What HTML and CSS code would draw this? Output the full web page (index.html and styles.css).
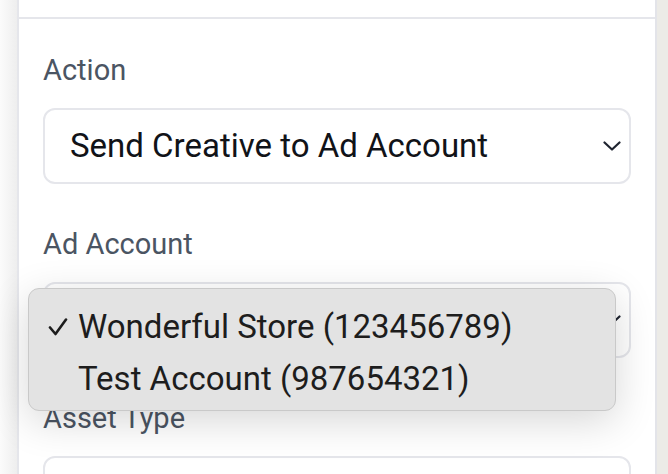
FILE: index.html
```html
<!DOCTYPE html>
<html>
<head>
<meta charset="utf-8">
<link rel="stylesheet" href="styles.css">
</head>
<body>
<div class="page">
  <div class="gutter-left"></div>
  <div class="card">
    <div class="card-top"></div>
    <div class="form">
      <div class="field">
        <div class="label">Action</div>
        <div class="select">
          <span class="value">Send Creative to Ad Account</span>
          <svg class="chev" width="18" height="10" viewBox="0 0 18 10"><polyline points="1.5,1.5 9,8.5 16.5,1.5" fill="none" stroke="#1f2430" stroke-width="2.2" stroke-linecap="round" stroke-linejoin="round"/></svg>
        </div>
      </div>
      <div class="field">
        <div class="label">Ad Account</div>
        <div class="select">
          <span class="value"></span>
          <svg class="chev" width="18" height="10" viewBox="0 0 18 10"><polyline points="1.5,1.5 9,8.5 16.5,1.5" fill="none" stroke="#1f2430" stroke-width="2.2" stroke-linecap="round" stroke-linejoin="round"/></svg>
        </div>
      </div>
      <div class="field last">
        <div class="label">Asset Type</div>
        <div class="select"></div>
      </div>
    </div>
  </div>
  <div class="gutter-right"></div>
</div>
<div class="popup">
  <div class="opt">
    <span class="check"><svg width="20" height="18" viewBox="0 0 20 18"><polyline points="2,9.5 7.5,16 18,1.5" fill="none" stroke="#1d1d1d" stroke-width="2.6" stroke-linecap="round" stroke-linejoin="round"/></svg></span>
    <span>Wonderful Store (123456789)</span>
  </div>
  <div class="opt">
    <span class="check"></span>
    <span>Test Account (987654321)</span>
  </div>
</div>
</body>
</html>
```

FILE: styles.css
```css
html, body {
  margin: 0;
  padding: 0;
  width: 668px;
  height: 474px;
  overflow: hidden;
  background: #fff;
  font-family: Roboto, "Liberation Sans", Arial, sans-serif;
}
.page {
  display: flex;
  height: 474px;
  overflow: hidden;
}
.gutter-left {
  width: 17px;
  flex: none;
  background: linear-gradient(to right, #fbfbfb, #eeeeee);
}
.card {
  flex: 1;
  background: #fff;
  border-left: 2px solid #e5e6eb;
  border-right: 2px solid #e3e4e9;
  overflow: hidden;
}
.card-top {
  height: 17px;
  border-bottom: 2px solid #e5e6eb;
}
.gutter-right {
  width: 11px;
  flex: none;
  background: #ecebe7;
}
.form {
  padding: 33px 24px 0 24px;
}
.field {
  margin-bottom: 42px;
}
.field.last {
  margin-bottom: 0;
}
.label {
  font-size: 29px;
  line-height: 36px;
  color: #4b5563;
  margin-bottom: 20px;
}
.select {
  height: 72px;
  border: 2px solid #e5e6eb;
  border-radius: 12px;
  display: flex;
  align-items: center;
  justify-content: space-between;
  padding: 0 8px 0 25px;
  background: #fff;
}
.value {
  font-size: 33px;
  color: #111318;
  line-height: 40px;
}
.chev {
  display: block;
}
.popup {
  position: absolute;
  left: 28px;
  top: 288px;
  width: 588px;
  height: 123px;
  background: #e3e3e3;
  border: 1px solid #c9c9c9;
  border-radius: 11px;
  box-shadow: 0 10px 40px rgba(0, 0, 0, 0.16);
  padding-top: 12px;
  box-sizing: border-box;
  font-size: 33px;
  color: #1d1d1d;
}
.opt {
  display: flex;
  align-items: center;
  height: 52px;
  line-height: 40px;
}
.check {
  width: 49px;
  padding-left: 19px;
  box-sizing: border-box;
  display: flex;
  align-items: center;
}
.check svg {
  display: block;
}
```
